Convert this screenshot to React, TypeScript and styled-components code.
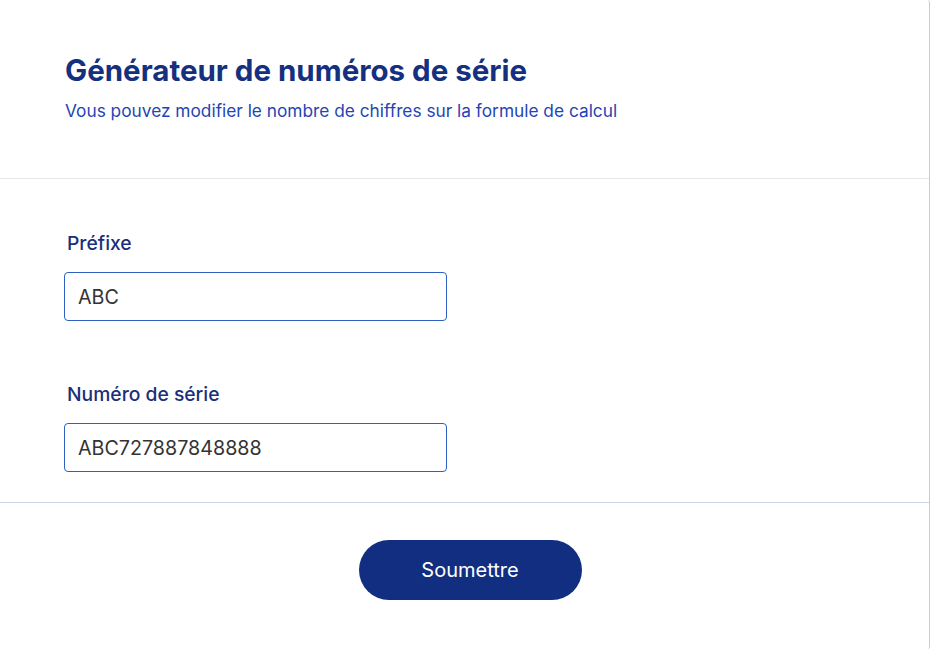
import { useState } from "react";
import styled, { createGlobalStyle } from "styled-components";

const GlobalStyle = createGlobalStyle`
  html, body {
    margin: 0;
    padding: 0;
    background: #ffffff;
  }
  body {
    font-family: Inter, "Noto Sans", sans-serif;
  }
`;

const Card = styled.div`
  box-sizing: border-box;
  width: 930px;
  height: 649px;
  background: #ffffff;
  border-right: 1px solid #bccbe6;
  border-radius: 0 3px 3px 0;
  display: flex;
  flex-direction: column;
`;

const Header = styled.header`
  padding: 52px 65px 0;
  height: 179px;
  box-sizing: border-box;
  border-bottom: 1px solid #e4e7ec;
`;

const Title = styled.h1`
  margin: 0;
  font-size: 29.5px;
  font-weight: 700;
  line-height: 36px;
  color: #14307f;
`;

const Subtitle = styled.p`
  margin: 12px 0 0;
  font-size: 17.3px;
  line-height: 22px;
  color: #1f45b4;
`;

const Body = styled.section`
  box-sizing: border-box;
  height: 324px;
  padding: 52px 64px 0;
  border-bottom: 1px solid #c9d7ea;
  display: flex;
  flex-direction: column;
  gap: 61px;
`;

const Field = styled.div`
  display: flex;
  flex-direction: column;
  gap: 17px;
`;

const Label = styled.label`
  padding-left: 3px;
  font-size: 19.3px;
  font-weight: 500;
  line-height: 24px;
  color: #1a2f7c;
`;

const Input = styled.input`
  box-sizing: border-box;
  width: 383px;
  height: 49px;
  padding: 0 13px;
  border: 1px solid #2f5ec4;
  border-radius: 4px;
  font-family: Inter, "Noto Sans", sans-serif;
  font-size: 19.7px;
  color: #333333;
  outline: none;
`;

const Footer = styled.footer`
  flex: 1;
  display: flex;
  justify-content: center;
  align-items: flex-start;
  padding: 37px 0 0 11px;
`;

const SubmitButton = styled.button`
  width: 223px;
  height: 60px;
  border: none;
  border-radius: 30px;
  background: #122e80;
  color: #ffffff;
  font-family: Inter, "Noto Sans", sans-serif;
  font-size: 20px;
  cursor: pointer;
`;

const App = () => {
  const [prefix, setPrefix] = useState("ABC");
  const [serial, setSerial] = useState("ABC727887848888");
  return (
    <>
      <GlobalStyle />
      <Card>
        <Header>
          <Title>Générateur de numéros de série</Title>
          <Subtitle>
            Vous pouvez modifier le nombre de chiffres sur la formule de calcul
          </Subtitle>
        </Header>
        <Body>
          <Field>
            <Label>Préfixe</Label>
            <Input value={prefix} onChange={(e) => setPrefix(e.target.value)} />
          </Field>
          <Field>
            <Label>Numéro de série</Label>
            <Input value={serial} onChange={(e) => setSerial(e.target.value)} />
          </Field>
        </Body>
        <Footer>
          <SubmitButton>Soumettre</SubmitButton>
        </Footer>
      </Card>
    </>
  );
};

export default App;
